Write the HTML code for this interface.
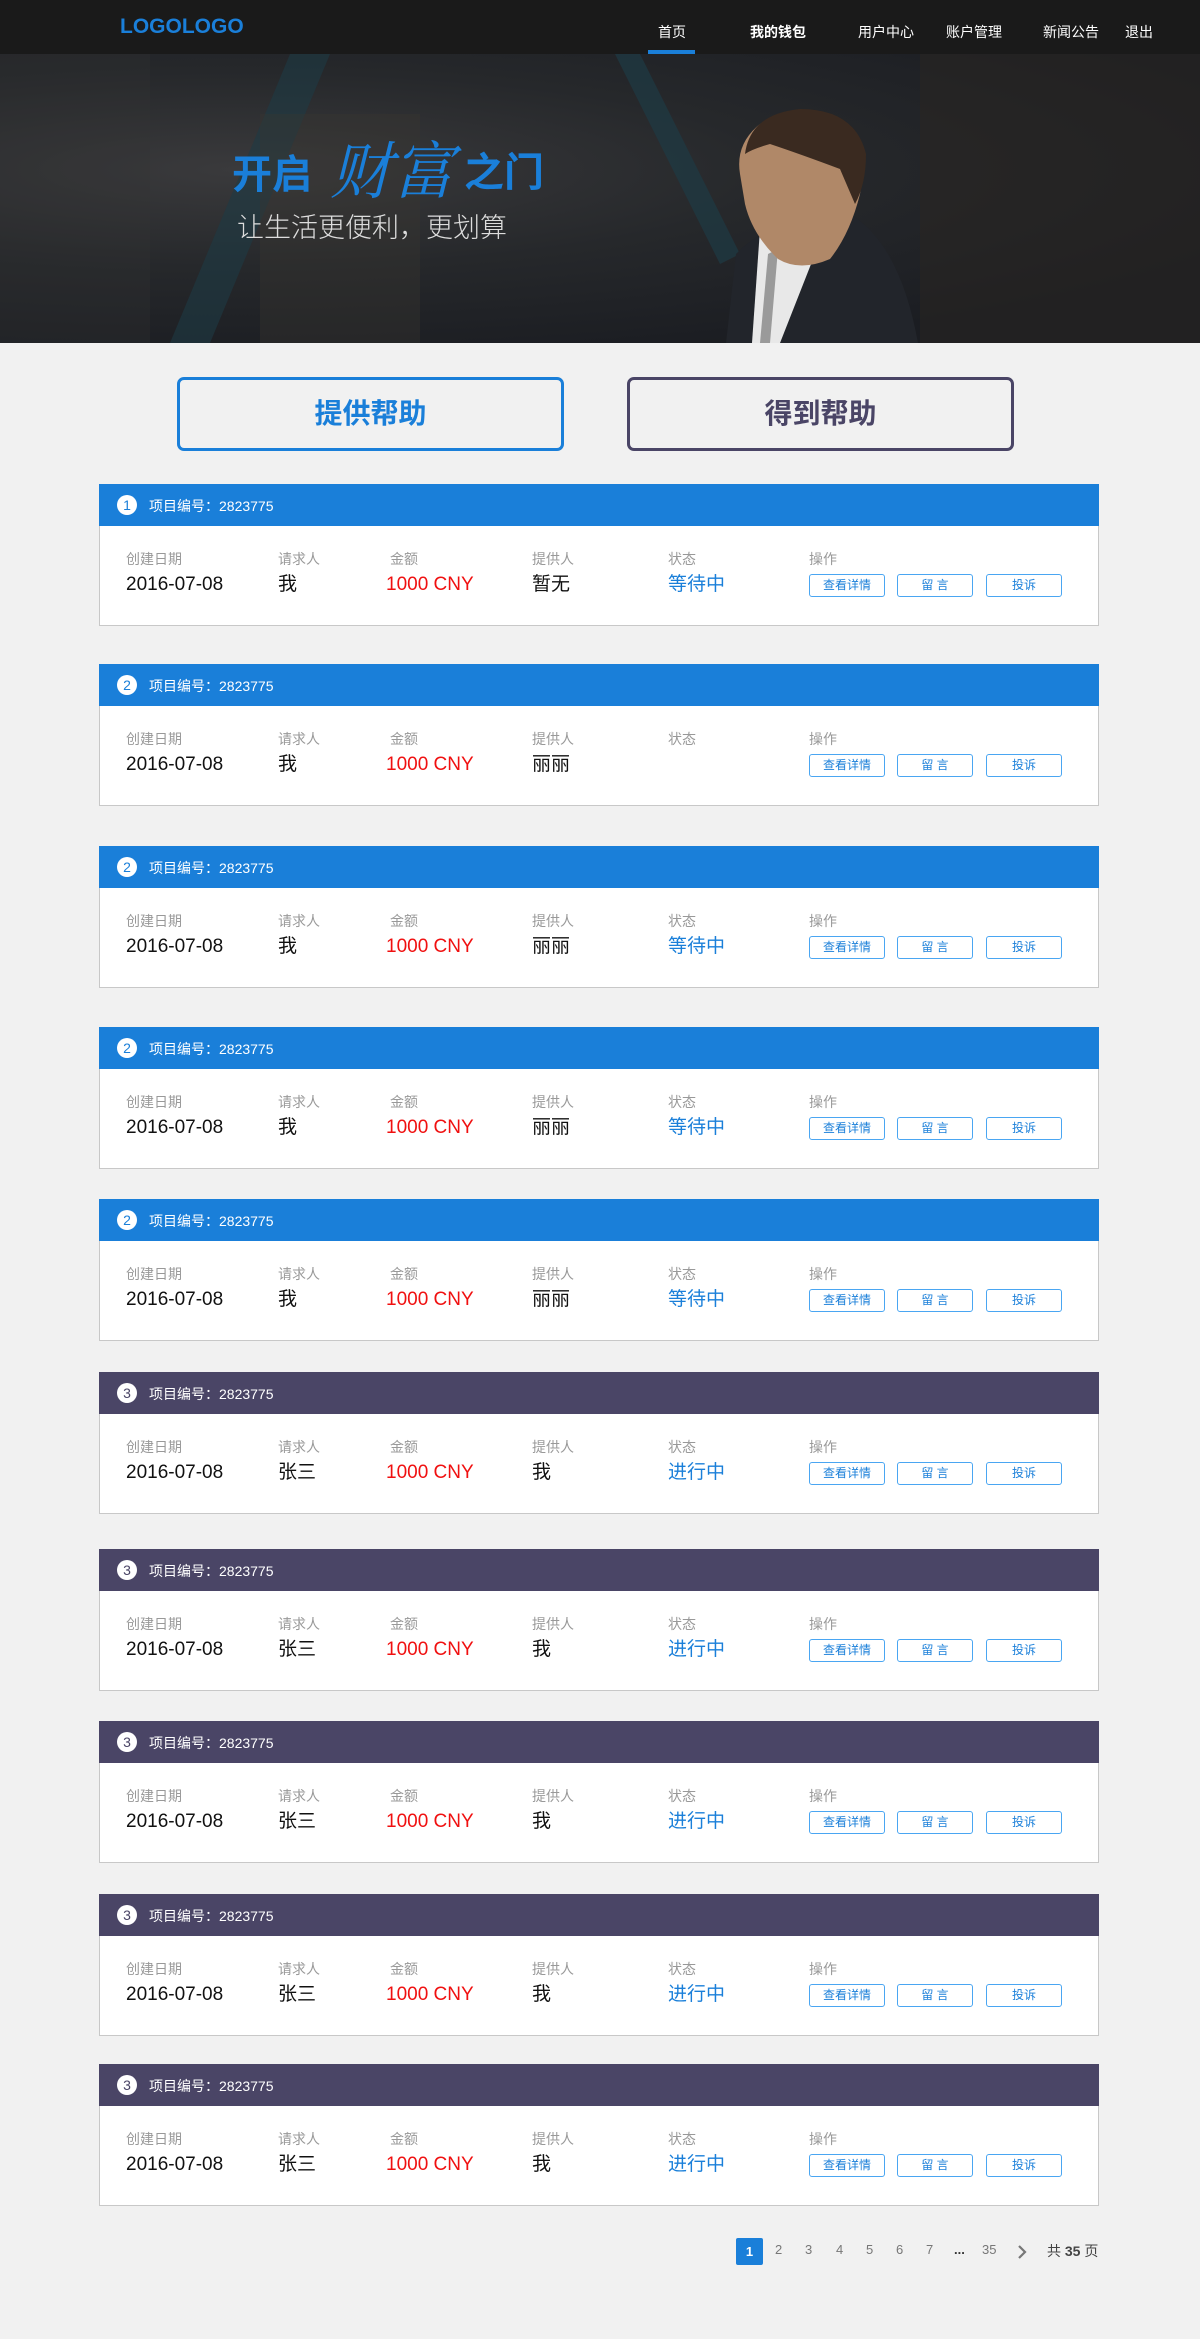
<!DOCTYPE html>
<html><head><meta charset="utf-8">
<style>
*{margin:0;padding:0;box-sizing:border-box}
body{width:1200px;height:2339px;background:#f1f1f1;font-family:"Liberation Sans","Noto Sans CJK SC",sans-serif;position:relative;overflow:hidden}
.hdr{position:absolute;left:0;top:0;width:1200px;height:54px;background:#1a1a1a}
.logo{position:absolute;left:120px;top:16px;font-size:21px;font-weight:bold;color:#1a7fd9;line-height:1}
.nav{position:absolute;top:22px;font-size:14px;color:#fff}
.uline{position:absolute;left:648px;top:50px;width:47px;height:4px;background:#1a7fd9}
.banner{position:absolute;left:0;top:54px;width:1200px;height:289px;overflow:hidden;
background:radial-gradient(ellipse at 20% 40%,#3a3a3c 0%,#26282b 40%,#1b1d22 80%),#1f2126}
.tt{position:absolute;color:#1a7fd9;font-weight:bold;line-height:1;white-space:nowrap}
.t2{position:absolute;left:237px;top:161px;font-size:27px;line-height:1;color:#ddd;font-weight:300;white-space:nowrap}
.btn{position:absolute;top:377px;width:387px;height:74px;border:3px solid #1a7fd9;border-radius:7px;font-size:28px;font-weight:bold;color:#1a7fd9;text-align:center;line-height:68px}
.btn.g{border-color:#4a4566;color:#4a4566}
.card{position:absolute;left:99px;width:1000px;height:142px;background:#fff;border:1px solid #c8c8c8}
.ch{position:absolute;left:-1px;top:-1px;width:1000px;height:42px;background:#1a7fd9;color:#fff;font-size:14px}
.p .ch{background:#4a4566}
.num{position:absolute;left:18px;top:11px;width:20px;height:20px;border-radius:50%;background:#fff;color:#1a7fd9;font-size:14px;text-align:center;line-height:20px}
.p .num{color:#4a4566}
.ct{position:absolute;left:50px;top:12px}
.l{position:absolute;top:67px;font-size:14px;line-height:1;color:#999;white-space:nowrap}
.v{position:absolute;top:90px;font-size:19px;line-height:1;color:#111;white-space:nowrap}
.red{color:#f01010}.blu{color:#1a7fd9}
.ob{position:absolute;top:89px;width:76px;height:23px;border:1px solid #4aa6f2;border-radius:3px;font-size:12px;color:#1a7fd9;text-align:center;line-height:21px}
.pg{position:absolute;top:2242px;font-size:13px;color:#777}
</style></head><body>
<div class="hdr">
<div class="logo">LOGOLOGO</div>
<div class="nav" style="left:658px">首页</div>
<div class="nav" style="left:750px;font-weight:bold">我的钱包</div>
<div class="nav" style="left:858px">用户中心</div>
<div class="nav" style="left:946px">账户管理</div>
<div class="nav" style="left:1043px">新闻公告</div>
<div class="nav" style="left:1125px">退出</div>
<div class="uline"></div>
</div>
<div class="banner">
<svg width="1200" height="289" style="position:absolute;left:0;top:0">
<polygon points="290,0 330,0 210,289 170,289" fill="#1e3a44" opacity="0.6"/>
<polygon points="615,0 640,0 740,200 720,210" fill="#1e3a44" opacity="0.7"/>
<rect x="0" y="0" width="150" height="289" fill="#333" opacity="0.25"/>
<rect x="920" y="0" width="280" height="289" fill="#2a2622" opacity="0.5"/>
<rect x="260" y="60" width="160" height="229" fill="#3a3630" opacity="0.35"/>
<path d="M726,289 L736,200 Q760,175 800,165 L850,160 Q900,190 918,289 Z" fill="#22252b"/>
<path d="M760,175 L800,165 L815,200 L780,289 L752,289 Z" fill="#e8e8e8"/>
<path d="M768,200 L778,195 L770,289 L760,289 Z" fill="#9a9a9a"/>
<path d="M740,120 Q735,90 760,70 Q800,55 840,70 Q868,95 860,140 Q850,180 830,205 Q800,218 778,205 Q752,180 745,150 Z" fill="#b08868"/>
<path d="M745,100 Q750,60 800,55 Q855,55 866,100 Q866,130 855,150 L840,115 Q800,100 770,90 Q752,95 745,100 Z" fill="#3a2a20"/>
</svg>
<div class="tt" style="left:232px;top:101px;font-size:40px">开启</div>
<div class="tt" style="left:330px;top:82px;font-size:62px;font-weight:normal;font-family:'Noto Serif CJK SC',serif;font-style:italic">财富</div>
<div class="tt" style="left:464px;top:99px;font-size:40px">之门</div>
<div class="t2">让生活更便利，更划算</div>
</div>
<div class="btn" style="left:177px">提供帮助</div>
<div class="btn g" style="left:627px">得到帮助</div>

<div class="card" style="top:484px"><div class="ch"><div class="num">1</div><div class="ct">项目编号：2823775</div></div>
<div class="l" style="left:26px">创建日期</div><div class="l" style="left:178px">请求人</div><div class="l" style="left:290px">金额</div><div class="l" style="left:432px">提供人</div><div class="l" style="left:568px">状态</div><div class="l" style="left:709px">操作</div>
<div class="v" style="left:26px">2016-07-08</div><div class="v" style="left:178px">我</div><div class="v red" style="left:286px">1000 CNY</div><div class="v" style="left:432px">暂无</div><div class="v blu" style="left:568px">等待中</div>
<div class="ob" style="left:709px">查看详情</div><div class="ob" style="left:797px">留 言</div><div class="ob" style="left:886px">投诉</div></div>

<div class="card" style="top:664px"><div class="ch"><div class="num">2</div><div class="ct">项目编号：2823775</div></div>
<div class="l" style="left:26px">创建日期</div><div class="l" style="left:178px">请求人</div><div class="l" style="left:290px">金额</div><div class="l" style="left:432px">提供人</div><div class="l" style="left:568px">状态</div><div class="l" style="left:709px">操作</div>
<div class="v" style="left:26px">2016-07-08</div><div class="v" style="left:178px">我</div><div class="v red" style="left:286px">1000 CNY</div><div class="v" style="left:432px">丽丽</div>
<div class="ob" style="left:709px">查看详情</div><div class="ob" style="left:797px">留 言</div><div class="ob" style="left:886px">投诉</div></div>

<div class="card" style="top:846px"><div class="ch"><div class="num">2</div><div class="ct">项目编号：2823775</div></div>
<div class="l" style="left:26px">创建日期</div><div class="l" style="left:178px">请求人</div><div class="l" style="left:290px">金额</div><div class="l" style="left:432px">提供人</div><div class="l" style="left:568px">状态</div><div class="l" style="left:709px">操作</div>
<div class="v" style="left:26px">2016-07-08</div><div class="v" style="left:178px">我</div><div class="v red" style="left:286px">1000 CNY</div><div class="v" style="left:432px">丽丽</div><div class="v blu" style="left:568px">等待中</div>
<div class="ob" style="left:709px">查看详情</div><div class="ob" style="left:797px">留 言</div><div class="ob" style="left:886px">投诉</div></div>

<div class="card" style="top:1027px"><div class="ch"><div class="num">2</div><div class="ct">项目编号：2823775</div></div>
<div class="l" style="left:26px">创建日期</div><div class="l" style="left:178px">请求人</div><div class="l" style="left:290px">金额</div><div class="l" style="left:432px">提供人</div><div class="l" style="left:568px">状态</div><div class="l" style="left:709px">操作</div>
<div class="v" style="left:26px">2016-07-08</div><div class="v" style="left:178px">我</div><div class="v red" style="left:286px">1000 CNY</div><div class="v" style="left:432px">丽丽</div><div class="v blu" style="left:568px">等待中</div>
<div class="ob" style="left:709px">查看详情</div><div class="ob" style="left:797px">留 言</div><div class="ob" style="left:886px">投诉</div></div>

<div class="card" style="top:1199px"><div class="ch"><div class="num">2</div><div class="ct">项目编号：2823775</div></div>
<div class="l" style="left:26px">创建日期</div><div class="l" style="left:178px">请求人</div><div class="l" style="left:290px">金额</div><div class="l" style="left:432px">提供人</div><div class="l" style="left:568px">状态</div><div class="l" style="left:709px">操作</div>
<div class="v" style="left:26px">2016-07-08</div><div class="v" style="left:178px">我</div><div class="v red" style="left:286px">1000 CNY</div><div class="v" style="left:432px">丽丽</div><div class="v blu" style="left:568px">等待中</div>
<div class="ob" style="left:709px">查看详情</div><div class="ob" style="left:797px">留 言</div><div class="ob" style="left:886px">投诉</div></div>

<div class="card p" style="top:1372px"><div class="ch"><div class="num">3</div><div class="ct">项目编号：2823775</div></div>
<div class="l" style="left:26px">创建日期</div><div class="l" style="left:178px">请求人</div><div class="l" style="left:290px">金额</div><div class="l" style="left:432px">提供人</div><div class="l" style="left:568px">状态</div><div class="l" style="left:709px">操作</div>
<div class="v" style="left:26px">2016-07-08</div><div class="v" style="left:178px">张三</div><div class="v red" style="left:286px">1000 CNY</div><div class="v" style="left:432px">我</div><div class="v blu" style="left:568px">进行中</div>
<div class="ob" style="left:709px">查看详情</div><div class="ob" style="left:797px">留 言</div><div class="ob" style="left:886px">投诉</div></div>

<div class="card p" style="top:1549px"><div class="ch"><div class="num">3</div><div class="ct">项目编号：2823775</div></div>
<div class="l" style="left:26px">创建日期</div><div class="l" style="left:178px">请求人</div><div class="l" style="left:290px">金额</div><div class="l" style="left:432px">提供人</div><div class="l" style="left:568px">状态</div><div class="l" style="left:709px">操作</div>
<div class="v" style="left:26px">2016-07-08</div><div class="v" style="left:178px">张三</div><div class="v red" style="left:286px">1000 CNY</div><div class="v" style="left:432px">我</div><div class="v blu" style="left:568px">进行中</div>
<div class="ob" style="left:709px">查看详情</div><div class="ob" style="left:797px">留 言</div><div class="ob" style="left:886px">投诉</div></div>

<div class="card p" style="top:1721px"><div class="ch"><div class="num">3</div><div class="ct">项目编号：2823775</div></div>
<div class="l" style="left:26px">创建日期</div><div class="l" style="left:178px">请求人</div><div class="l" style="left:290px">金额</div><div class="l" style="left:432px">提供人</div><div class="l" style="left:568px">状态</div><div class="l" style="left:709px">操作</div>
<div class="v" style="left:26px">2016-07-08</div><div class="v" style="left:178px">张三</div><div class="v red" style="left:286px">1000 CNY</div><div class="v" style="left:432px">我</div><div class="v blu" style="left:568px">进行中</div>
<div class="ob" style="left:709px">查看详情</div><div class="ob" style="left:797px">留 言</div><div class="ob" style="left:886px">投诉</div></div>

<div class="card p" style="top:1894px"><div class="ch"><div class="num">3</div><div class="ct">项目编号：2823775</div></div>
<div class="l" style="left:26px">创建日期</div><div class="l" style="left:178px">请求人</div><div class="l" style="left:290px">金额</div><div class="l" style="left:432px">提供人</div><div class="l" style="left:568px">状态</div><div class="l" style="left:709px">操作</div>
<div class="v" style="left:26px">2016-07-08</div><div class="v" style="left:178px">张三</div><div class="v red" style="left:286px">1000 CNY</div><div class="v" style="left:432px">我</div><div class="v blu" style="left:568px">进行中</div>
<div class="ob" style="left:709px">查看详情</div><div class="ob" style="left:797px">留 言</div><div class="ob" style="left:886px">投诉</div></div>

<div class="card p" style="top:2064px"><div class="ch"><div class="num">3</div><div class="ct">项目编号：2823775</div></div>
<div class="l" style="left:26px">创建日期</div><div class="l" style="left:178px">请求人</div><div class="l" style="left:290px">金额</div><div class="l" style="left:432px">提供人</div><div class="l" style="left:568px">状态</div><div class="l" style="left:709px">操作</div>
<div class="v" style="left:26px">2016-07-08</div><div class="v" style="left:178px">张三</div><div class="v red" style="left:286px">1000 CNY</div><div class="v" style="left:432px">我</div><div class="v blu" style="left:568px">进行中</div>
<div class="ob" style="left:709px">查看详情</div><div class="ob" style="left:797px">留 言</div><div class="ob" style="left:886px">投诉</div></div>

<div style="position:absolute;left:736px;top:2238px;width:27px;height:27px;background:#1a7fd9;border-radius:2px;color:#fff;font-size:13px;font-weight:bold;text-align:center;line-height:27px">1</div>
<div class="pg" style="left:775px">2</div>
<div class="pg" style="left:805px">3</div>
<div class="pg" style="left:836px">4</div>
<div class="pg" style="left:866px">5</div>
<div class="pg" style="left:896px">6</div>
<div class="pg" style="left:926px">7</div>
<div class="pg" style="left:954px;color:#333;font-weight:bold">...</div>
<div class="pg" style="left:982px">35</div>
<svg style="position:absolute;left:1017px;top:2245px" width="10" height="14"><path d="M2,1 L8,7 L2,13" stroke="#777" stroke-width="2.2" fill="none"/></svg>
<div class="pg" style="left:1047px;color:#444;font-size:14px;top:2241px">共 <b>35</b> 页</div>
</body></html>
